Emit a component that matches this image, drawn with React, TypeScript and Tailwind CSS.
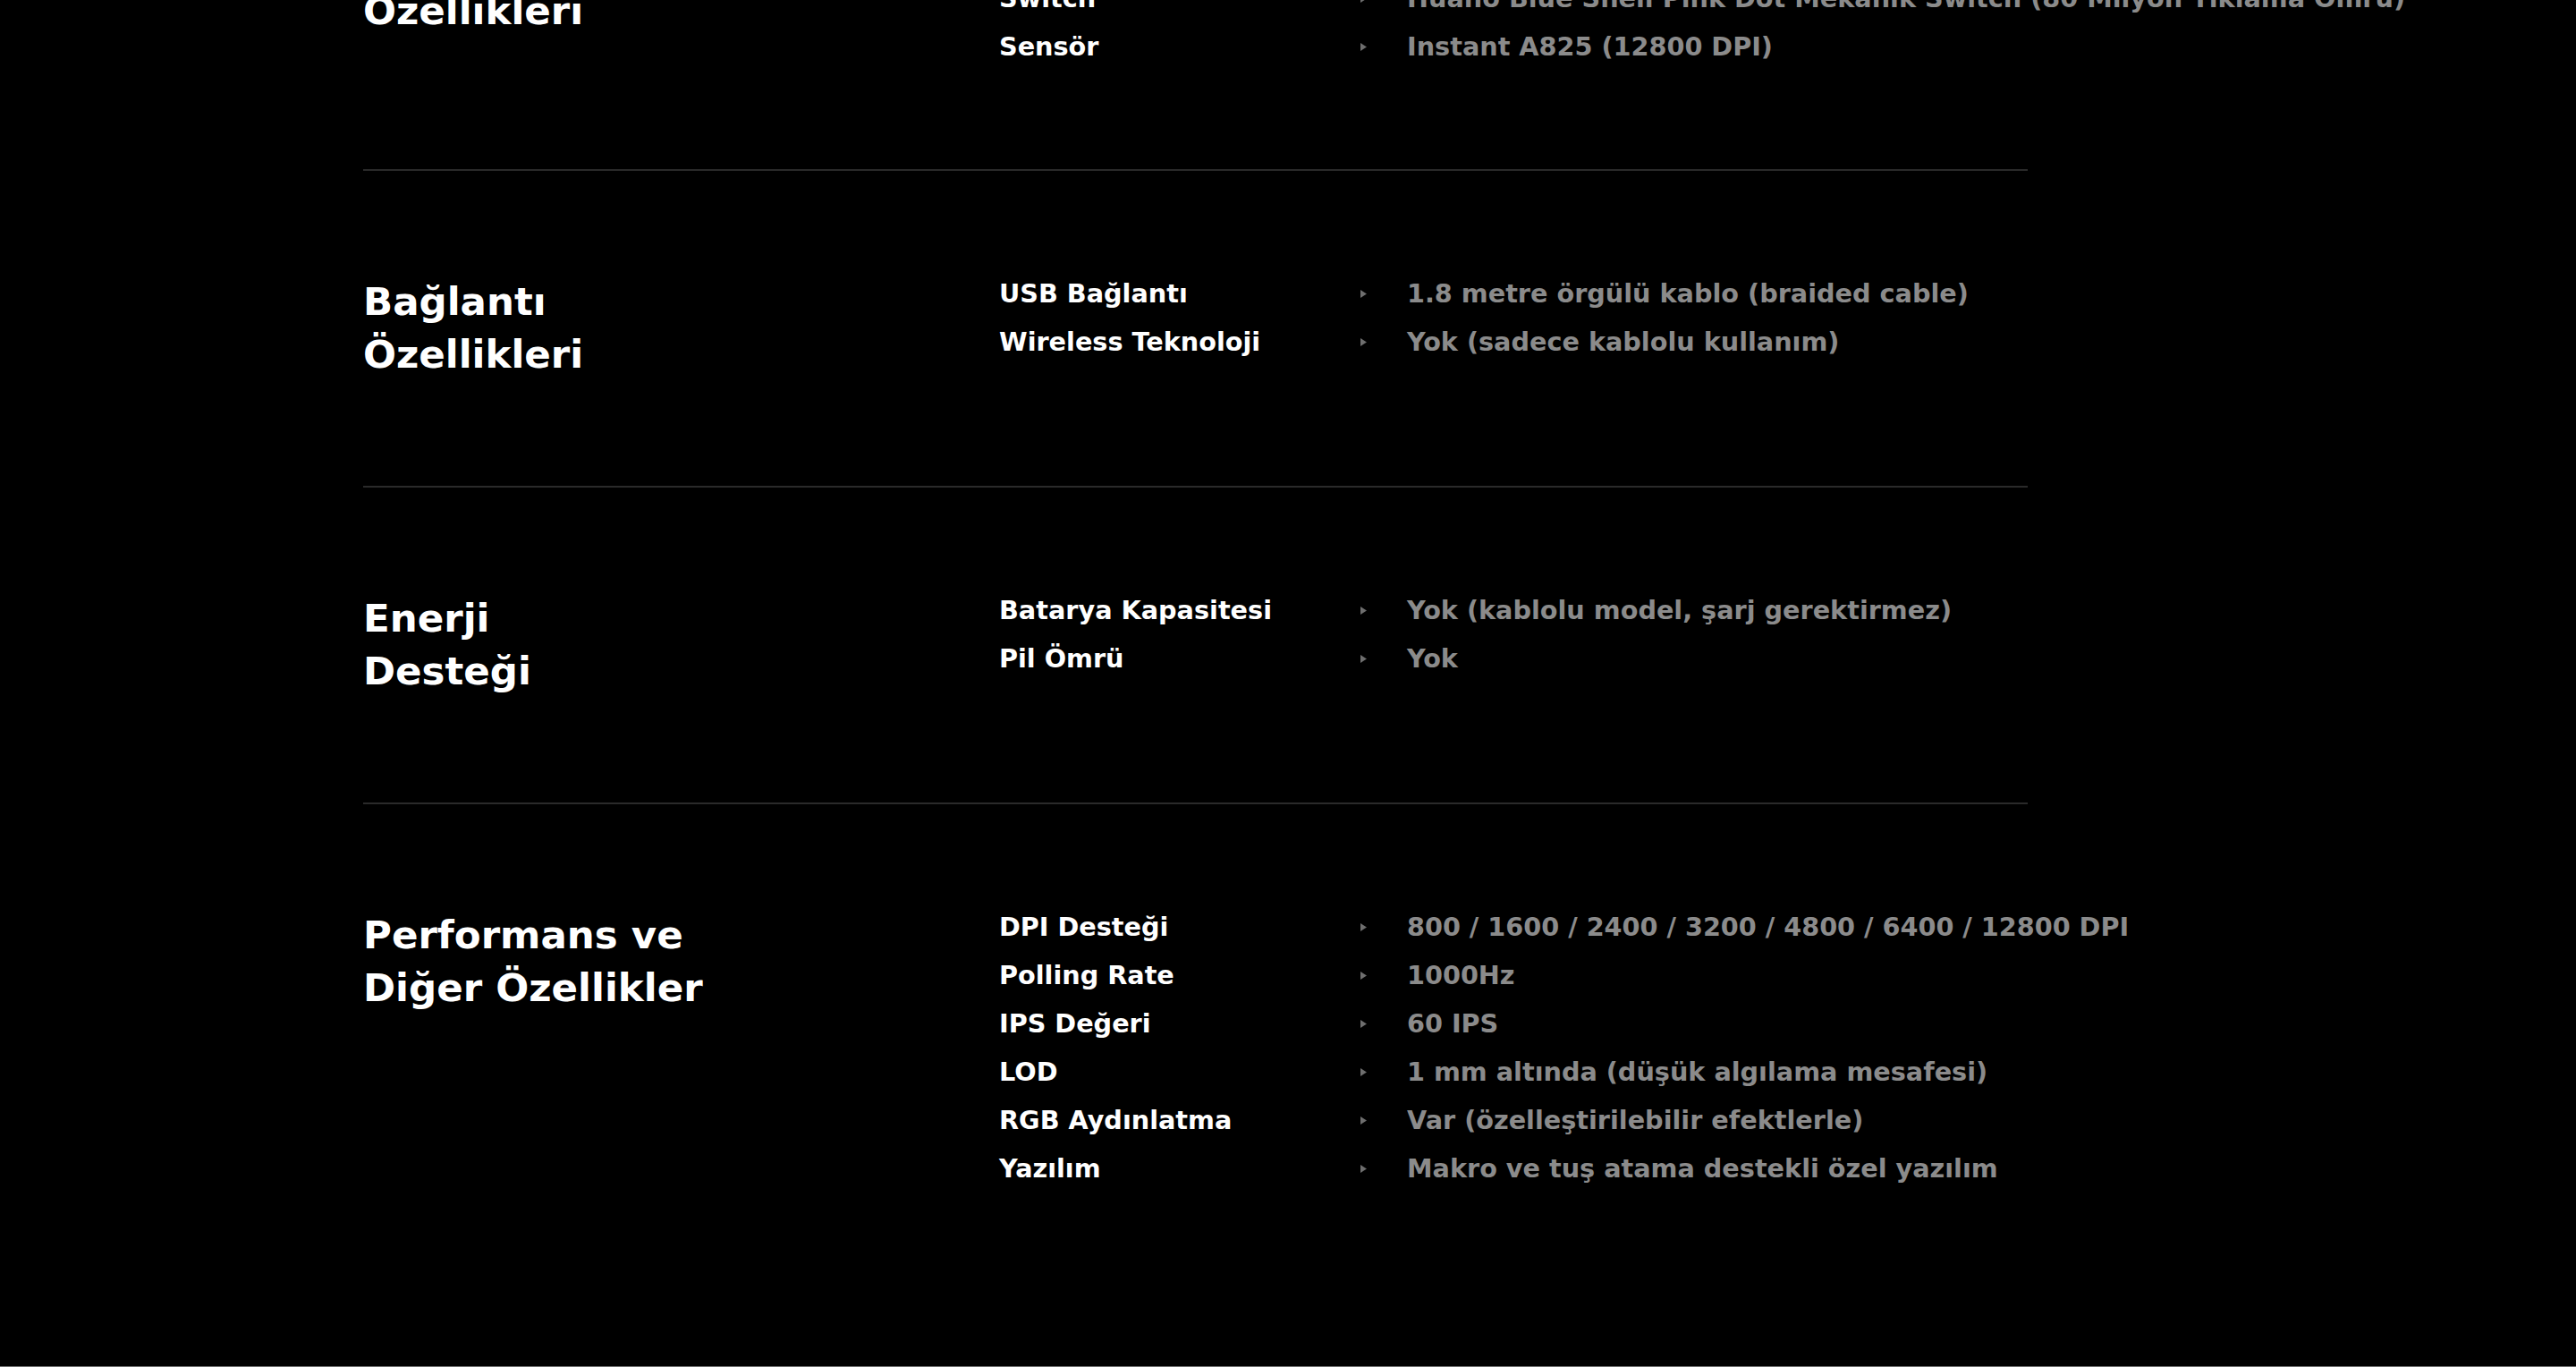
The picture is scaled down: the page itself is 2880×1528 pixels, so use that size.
type Spec = { label: string; value: string };

type Group = { title: string[]; specs: Spec[] };

const groups: Group[] = [
  {
    title: ["Donanım", "Özellikleri"],
    specs: [
      { label: "Ağırlık", value: "68 gram (ultra hafif tasarım)" },
      { label: "Switch", value: "Huano Blue Shell Pink Dot Mekanik Switch (80 Milyon Tıklama Ömrü)" },
      { label: "Sensör", value: "Instant A825 (12800 DPI)" },
    ],
  },
  {
    title: ["Bağlantı", "Özellikleri"],
    specs: [
      { label: "USB Bağlantı", value: "1.8 metre örgülü kablo (braided cable)" },
      { label: "Wireless Teknoloji", value: "Yok (sadece kablolu kullanım)" },
    ],
  },
  {
    title: ["Enerji", "Desteği"],
    specs: [
      { label: "Batarya Kapasitesi", value: "Yok (kablolu model, şarj gerektirmez)" },
      { label: "Pil Ömrü", value: "Yok" },
    ],
  },
  {
    title: ["Performans ve", "Diğer Özellikler"],
    specs: [
      { label: "DPI Desteği", value: "800 / 1600 / 2400 / 3200 / 4800 / 6400 / 12800 DPI" },
      { label: "Polling Rate", value: "1000Hz" },
      { label: "IPS Değeri", value: "60 IPS" },
      { label: "LOD", value: "1 mm altında (düşük algılama mesafesi)" },
      { label: "RGB Aydınlatma", value: "Var (özelleştirilebilir efektlerle)" },
      { label: "Yazılım", value: "Makro ve tuş atama destekli özel yazılım" },
    ],
  },
];

function Arrow() {
  return (
    <svg width="7" height="9" viewBox="0 0 7 9" className="shrink-0">
      <path d="M0 0 L7 4.5 L0 9 Z" fill="#6e6e6e" />
    </svg>
  );
}

function SpecGroup({ group, last }: { group: Group; last: boolean }) {
  return (
    <section
      className={`flex items-start py-[117px] ${last ? "" : "border-b-2 border-[#2a2a2a]"}`}
    >
      <h3 className="w-[711px] shrink-0 text-[43.5px] leading-[59px] font-bold text-white">
        {group.title.map((line) => (
          <span key={line} className="block">
            {line}
          </span>
        ))}
      </h3>
      <ul className="flex flex-col gap-[14px]">
        {group.specs.map((s) => (
          <li key={s.label} className="flex items-center h-[40px] text-[28.7px] leading-[40px] font-bold">
            <span className="w-[404px] shrink-0 text-white">{s.label}</span>
            <span className="w-[52px] shrink-0 flex items-center">
              <Arrow />
            </span>
            <span className="whitespace-nowrap text-[#8b8b8b]">{s.value}</span>
          </li>
        ))}
      </ul>
    </section>
  );
}

export default function App() {
  return (
    <div
      className="h-[1528px] w-full overflow-hidden bg-black flex flex-col"
      style={{ fontFamily: '"DejaVu Sans", "Noto Sans", sans-serif' }}
    >
      <div className="ml-[406px] w-[1861px] -mt-[193px] flex flex-col">
        {groups.map((g, i) => (
          <SpecGroup key={g.title.join(" ")} group={g} last={i === groups.length - 1} />
        ))}
      </div>
      <div className="flex-1" />
      <div className="h-px bg-[#707070]" />
    </div>
  );
}
